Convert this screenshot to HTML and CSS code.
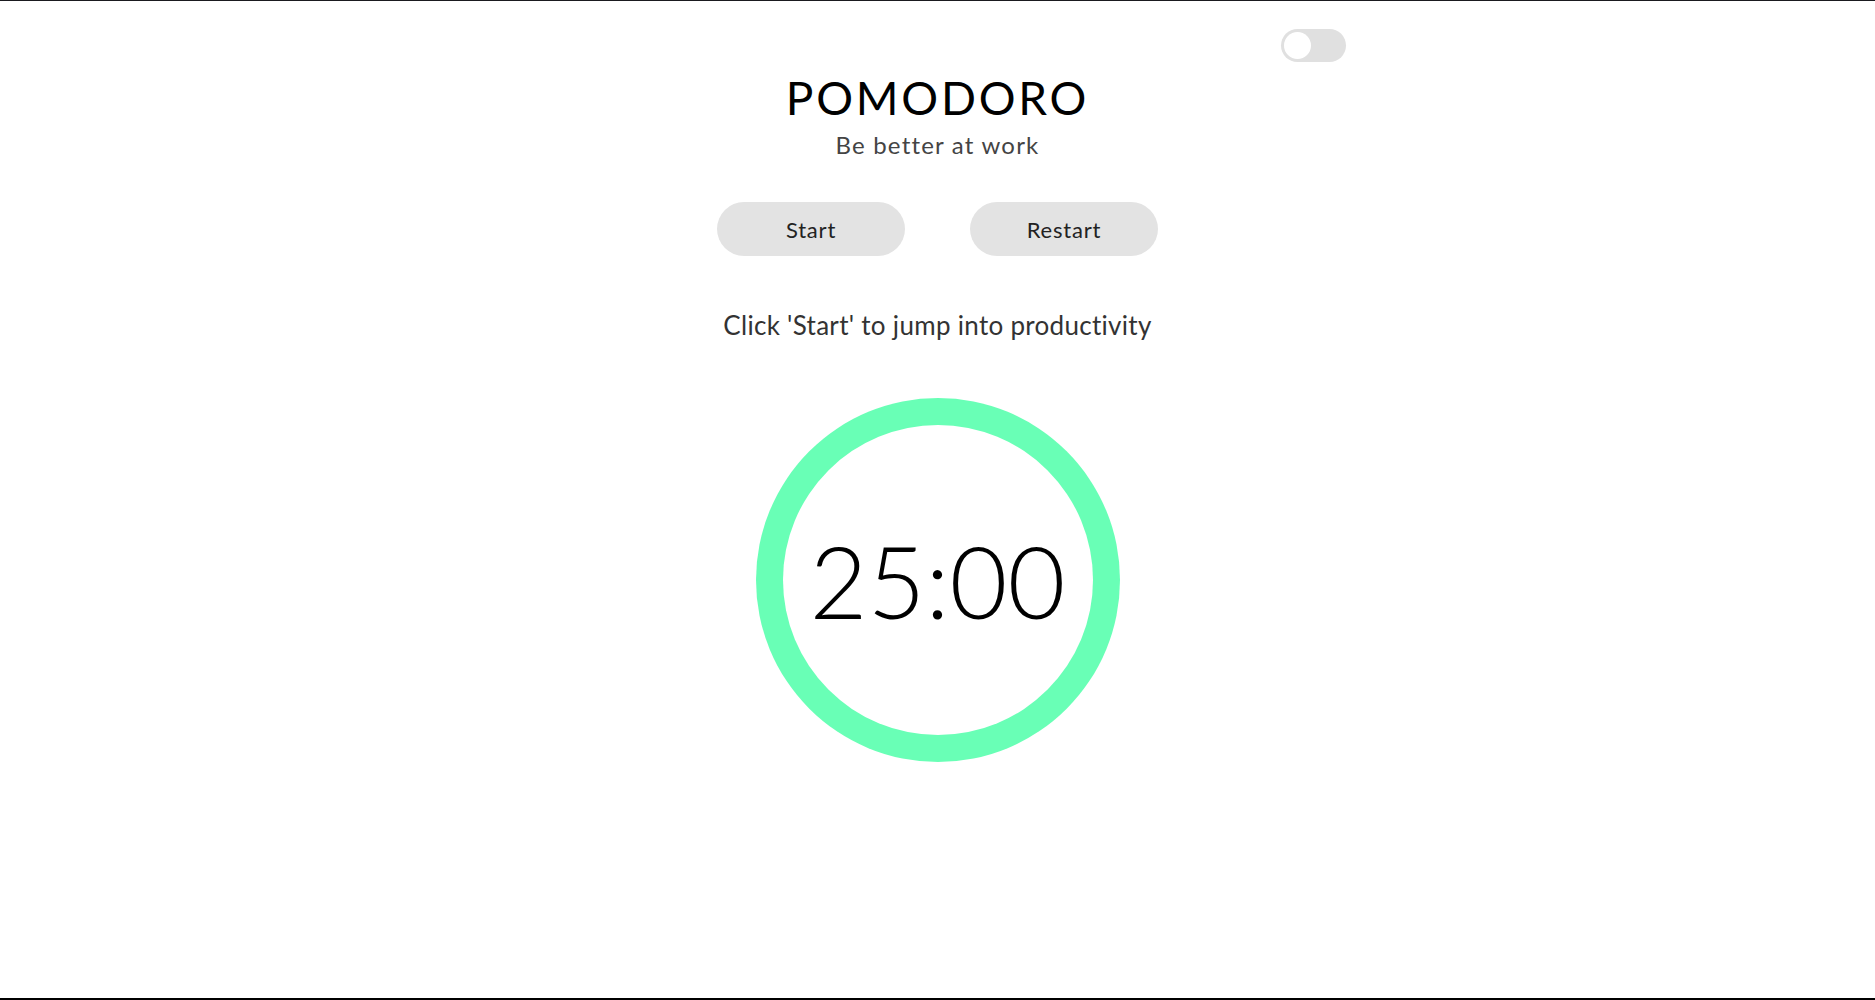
FILE: index.html
```html
<!DOCTYPE html>
<html lang="en">
<head>
<meta charset="utf-8">
<title>Pomodoro</title>
<link rel="stylesheet" href="styles.css">
</head>
<body>
<div class="page">
  <div class="topbar">
    <label class="toggle"><span class="knob"></span></label>
  </div>
  <header class="head">
    <h1 class="title">POMODORO</h1>
    <p class="subtitle">Be better at work</p>
  </header>
  <div class="controls">
    <button class="btn">Start</button>
    <button class="btn">Restart</button>
  </div>
  <p class="hint">Click 'Start' to jump into productivity</p>
  <div class="ring">
    <div class="inner"><span class="time">25:00</span></div>
  </div>
</div>
</body>
</html>
```
FILE: styles.css
```css
* { box-sizing: border-box; }
html, body { margin: 0; padding: 0; background: #fff; }
body { font-family: "Lato", "Noto Sans", sans-serif; color: #000; }
.page {
  height: 1000px;
  border-top: 1px solid #1a1a1f;
  border-bottom: 2px solid #000;
  display: flex;
  flex-direction: column;
  align-items: center;
}
.topbar {
  width: 816px;
  display: flex;
  justify-content: flex-end;
  padding-left: 2px;
  padding-top: 28px;
}
.toggle {
  width: 65px;
  height: 33px;
  border-radius: 17px;
  background: #e0e0e0;
  display: flex;
  align-items: center;
  padding-left: 3px;
}
.knob {
  width: 27px;
  height: 27px;
  border-radius: 50%;
  background: #fff;
}
.head { text-align: center; margin-top: 8px; }
.title {
  margin: 0;
  font-weight: 400;
  font-size: 46px;
  line-height: 56px;
  letter-spacing: 2.8px;
}
.subtitle {
  margin: 4px 0 0;
  font-size: 24px;
  line-height: 30px;
  letter-spacing: 1.2px;
  color: #444;
}
.controls {
  display: flex;
  gap: 65px;
  margin-top: 42px;
}
.btn {
  width: 188px;
  height: 54px;
  border: none;
  border-radius: 27px;
  background: #e3e3e3;
  font-family: inherit;
  font-size: 22px;
  letter-spacing: 0.8px;
  color: #222;
  padding: 0;
}
.hint {
  margin: 54px 0 0;
  font-size: 26px;
  line-height: 30px;
  letter-spacing: 0.3px;
  color: #333;
}
.ring {
  margin-top: 58px;
  width: 364px;
  height: 364px;
  border-radius: 50%;
  background: #69ffb6;
  display: flex;
  align-items: center;
  justify-content: center;
}
.inner {
  width: 310px;
  height: 310px;
  border-radius: 50%;
  background: #fff;
  display: flex;
  align-items: center;
  justify-content: center;
}
.time {
  font-size: 100px;
  font-weight: 300;
  line-height: 1;
}
```
